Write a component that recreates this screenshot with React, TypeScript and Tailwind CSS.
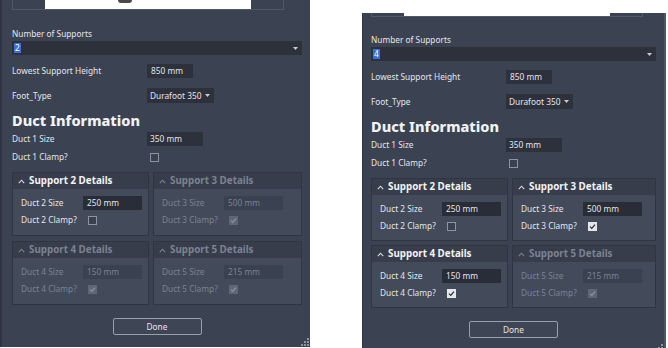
import React from 'react';

type Sup = { n: number; size: number; clamp: boolean };

const supports: Sup[] = [
  { n: 2, size: 250, clamp: false },
  { n: 3, size: 500, clamp: true },
  { n: 4, size: 150, clamp: true },
  { n: 5, size: 215, clamp: true },
];

const Caret = ({ dim }: { dim?: boolean }) => (
  <svg width="7" height="5" viewBox="0 0 7 5" className={dim ? 'text-[#7b8391]' : 'text-[#d9dce1]'}>
    <path d="M0.8 4.2 L3.5 1.2 L6.2 4.2" fill="none" stroke="currentColor" strokeWidth="1.1" />
  </svg>
);

const Box = ({ checked, disabled }: { checked?: boolean; disabled?: boolean }) => {
  if (!checked) {
    return <div className="w-[9px] h-[9px] border border-[#8d94a1] bg-[#3a404e]" />;
  }
  return (
    <div
      className={
        disabled
          ? 'w-[9px] h-[9px] bg-[#5f6776] flex items-center justify-center'
          : 'w-[9px] h-[9px] bg-[#e4e6ea] flex items-center justify-center'
      }
    >
      <svg width="7" height="7" viewBox="0 0 7 7">
        <path
          d="M1 3.6 L2.8 5.4 L6 1.6"
          fill="none"
          stroke={disabled ? '#8d94a1' : '#2a2f3a'}
          strokeWidth="1.3"
        />
      </svg>
    </div>
  );
};

const Group = ({ s, enabled, h }: { s: Sup; enabled: boolean; h: string }) => (
  <div className={`border border-[#2f3541] bg-[#434a59] ${h}`}>
    <div className="h-[16px] bg-[#373d4b] flex items-center pl-[5px] gap-[4px]">
      <Caret dim={!enabled} />
      <span className={enabled ? 'text-[9.8px] font-bold text-[#f2f3f5]' : 'text-[9.8px] font-bold text-[#7b8391]'}>
        Support {s.n} Details
      </span>
    </div>
    <div className={enabled ? 'pl-[8px] pt-[7px] text-[#e4e6ea]' : 'pl-[8px] pt-[7px] text-[#7b8391]'}>
      <div className="flex items-center h-[14px]">
        <span className="w-[62px]">Duct {s.n} Size</span>
        <div
          className={
            enabled
              ? 'w-[59px] h-[14px] bg-[#282d37] pl-[4px] flex items-center'
              : 'w-[59px] h-[14px] bg-[#3a4150] pl-[4px] flex items-center'
          }
        >
          {s.size} mm
        </div>
      </div>
      <div className="flex items-center h-[14px] mt-[3px]">
        <span className="w-[67px]">Duct {s.n} Clamp?</span>
        <Box checked={s.clamp} disabled={!enabled} />
      </div>
    </div>
  </div>
);

const Grip = () => (
  <svg width="8" height="8" viewBox="0 0 8 8" className="absolute right-[1px] bottom-[1px]">
    {[
      [6, 0],
      [6, 3],
      [3, 3],
      [6, 6],
      [3, 6],
      [0, 6],
    ].map(([x, y], i) => (
      <rect key={i} x={x} y={y} width="2" height="2" fill="#8d94a1" />
    ))}
  </svg>
);

type PanelProps = {
  count: number;
  frame: string;
  labelMt: string;
  rowH: string;
  rowGap: string;
  bump?: boolean;
  cls: string;
  pad: string;
};

const Panel = ({ count, frame, labelMt, rowH, rowGap, bump, cls, pad }: PanelProps) => (
  <div className={`relative bg-[#3b4252] text-[8.3px] leading-[12px] text-[#e4e6ea] flex flex-col shrink-0 ${cls}`}>
    <div className={`${pad} shrink-0`}>
      <div className={`w-[272px] ${frame} border-x border-b border-[#50586a] flex`}>
        <div className="ml-[32px] w-[206px] h-full bg-white flex">
          {bump && <div className="ml-[73px] w-[14px] h-[3px] rounded-b-full bg-[#4a4a4a]" />}
        </div>
      </div>
    </div>
    <div className={`${pad} flex flex-col`}>
      <div className={labelMt}>Number of Supports</div>
      <div className="mt-[1px] h-[14px] bg-[#2c313c] flex items-center justify-between pl-[2px] pr-[4px]">
        <span className="bg-[#3474d4] text-white px-[1px] leading-[10px]">{count}</span>
        <svg width="5" height="3" viewBox="0 0 5 3">
          <path d="M0 0 L5 0 L2.5 3 Z" fill="#c9ccd2" />
        </svg>
      </div>
      <div className="mt-[9px] flex items-center h-[14px]">
        <span className="w-[135px]">Lowest Support Height</span>
        <div className="w-[46px] h-[14px] bg-[#2c313c] pl-[4px] flex items-center">850 mm</div>
      </div>
      <div className="mt-[10px] flex items-center h-[15px]">
        <span className="w-[135px]">Foot_Type</span>
        <div className="w-[67px] h-[15px] bg-[#2c313c] pl-[3px] pr-[4px] flex items-center justify-between">
          <span>Durafoot 350</span>
          <svg width="5" height="3" viewBox="0 0 5 3">
            <path d="M0 0 L5 0 L2.5 3 Z" fill="#c9ccd2" />
          </svg>
        </div>
      </div>
      <div className="mt-[8px] text-[14.5px] leading-[18px] font-extrabold text-[#f2f3f5]">Duct Information</div>
      <div className="mt-[3px] flex items-center h-[14px]">
        <span className="w-[135px]">Duct 1 Size</span>
        <div className="w-[56px] h-[14px] bg-[#2c313c] pl-[3px] flex items-center">350 mm</div>
      </div>
      <div className="mt-[4px] flex items-center h-[14px]">
        <span className="w-[138px]">Duct 1 Clamp?</span>
        <Box />
      </div>
      <div className={`mt-[8px] grid grid-cols-[137px_1fr] gap-x-[4px] ${rowGap}`}>
        {supports.map((s) => (
          <Group key={s.n} s={s} enabled={s.n <= count} h={rowH} />
        ))}
      </div>
      <div className="mt-[13px] flex justify-center">
        <div className="w-[89px] h-[17px] border border-[#9aa0aa] rounded-[2px] bg-[#3e4555] flex items-center justify-center">
          Done
        </div>
      </div>
    </div>
    <Grip />
  </div>
);

export default function App() {
  return (
    <div className="w-[668px] h-[348px] bg-white overflow-hidden flex items-start font-['Noto_Sans',sans-serif]">
      <Panel
        count={2}
        frame="h-[10px]"
        labelMt="mt-[18px]"
        rowH="h-[64px]"
        rowGap="gap-y-[5px]"
        bump
        cls="w-[310px] h-[347px] border-l-2 border-[#2f3542]"
        pad="pl-[10px] pr-[8px]"
      />
      <Panel
        count={4}
        frame="h-[4px]"
        labelMt="mt-[17px]"
        rowH="h-[63px]"
        rowGap="gap-y-[4px]"
        cls="ml-[52px] mt-[13px] w-[304px] h-[340px] border-l border-r-2 border-l-[#2f3542] border-r-[#4d5566]"
        pad="pl-[8px] pr-[8px]"
      />
    </div>
  );
}
